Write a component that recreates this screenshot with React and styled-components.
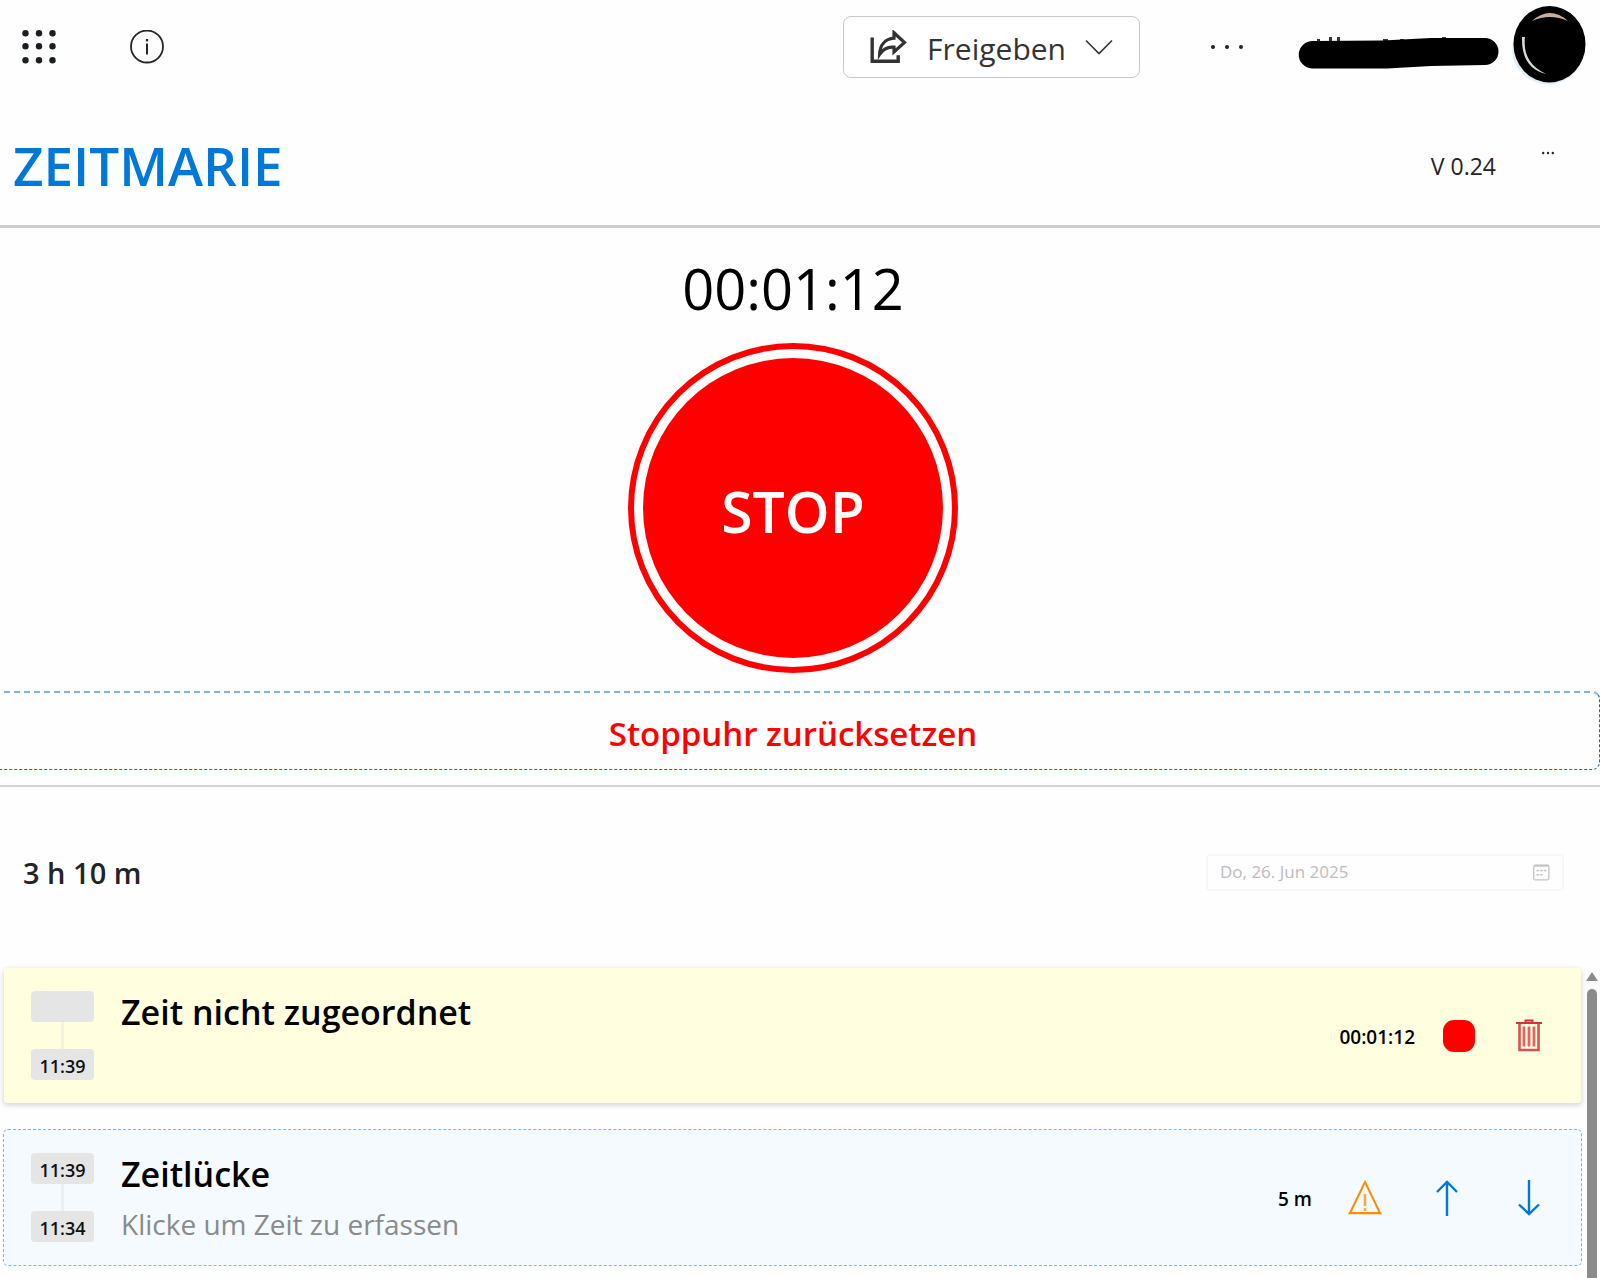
import React from "react";
import styled, { createGlobalStyle } from "styled-components";

const GlobalStyle = createGlobalStyle`
* {
    box-sizing: border-box;
}
body {
    margin: 0;
    background: #fefefe;
    color: #242424;
    font-family: "Segoe UI", "Open Sans", "Noto Sans", sans-serif;
    overflow: hidden;
}
button {
    font-family: inherit;
    padding: 0;
    border: 0;
    background: transparent;
    cursor: pointer;
}
svg {
    display: block;
}
`;

const Page = styled.div`
min-height: 100vh;
display: flex;
flex-direction: column;
overflow: hidden;
`;

const TopBar = styled.header`
height: 94px;
display: flex;
align-items: center;
justify-content: space-between;
padding: 0 14px 0 20px;
`;

const BarGroup = styled.div`
display: flex;
align-items: center;
gap: ${props => props.$gap}px;
`;

const ShareButton = styled.button`
height: 62px;
display: flex;
align-items: center;
gap: 19px;
padding: 0 26px;
border: 1px solid #c8c8c8;
border-radius: 8px;
background: #ffffff;
color: #333333;
font-size: 30px;
line-height: 40px;
`;

const ShareLabel = styled.span`
padding-top: 4px;
`;

const Account = styled.button`
display: flex;
align-items: center;
gap: 11px;
`;

const TitleBar = styled.div`
height: 134px;
display: flex;
align-items: center;
justify-content: space-between;
padding: 13px 46px 0 13px;
border-bottom: 3px solid #cccccc;
`;

const Title = styled.h1`
margin: 0;
color: #0078d7;
font-size: 53px;
line-height: 72px;
font-weight: 600;
`;

const Version = styled.div`
display: flex;
align-items: center;
gap: 46px;
font-size: 23px;
line-height: 32px;
`;

const DotsButton = styled.button`
align-self: flex-start;
`;

const Stopwatch = styled.section`
display: flex;
flex-direction: column;
align-items: center;
margin-left: -14px;
padding-top: 24px;
`;

const Elapsed = styled.div`
color: #000000;
font-size: 56px;
line-height: 72px;
margin-bottom: 19px;
`;

const StopButton = styled.button`
width: 330px;
height: 330px;
padding: 9px;
border: 6px solid #ff0000;
border-radius: 50%;
margin-bottom: 18px;
`;

const StopFace = styled.span`
height: 100%;
display: flex;
align-items: center;
justify-content: center;
padding-top: 6px;
border-radius: 50%;
background: #ff0000;
color: #ffffff;
font-size: 57px;
line-height: 72px;
font-weight: 600;
`;

const ResetButton = styled.button`
align-self: stretch;
height: 79px;
padding-top: 6px;
border: 1px dashed #1c6cb8;
border-top: 2px dashed #7fb3e0;
border-radius: 8px;
color: #ff0000;
font-size: 33px;
line-height: 48px;
font-weight: 600;
`;

const Divider = styled.hr`
width: 100%;
height: 2px;
margin: 15px 0 0;
border: 0;
background: #d4d4d4;
`;

const DayBar = styled.div`
display: flex;
align-items: center;
justify-content: space-between;
padding: 64px 36px 0 23px;
`;

const Total = styled.div`
padding-top: 2px;
font-size: 29px;
line-height: 40px;
font-weight: 600;
`;

const DateField = styled.label`
width: 358px;
height: 37px;
display: flex;
align-items: center;
padding: 0 12px;
border: 2px solid #f7f7f7;
border-radius: 4px;
`;

const DateInput = styled.input`
flex: 1;
min-width: 0;
padding: 0;
border: 0;
outline: 0;
background: transparent;
color: #bdbdbd;
font-family: inherit;
font-size: 17px;
line-height: 24px;
`;

const ListArea = styled.main`
flex: 1;
display: flex;
margin-top: 74px;
`;

const List = styled.ul`
flex: 1;
display: flex;
flex-direction: column;
gap: 25px;
margin: 0;
padding: 0 4px 12px 3px;
list-style: none;
`;

const Entry = styled.li`
height: 137px;
display: flex;
align-items: center;
padding: 0 35px 0 27px;
border: 1px ${props => props.$gap ? "dashed #7ab4e2" : "solid transparent"};
border-radius: 5px;
background: ${props => props.$gap ? "#f4fafd" : "#ffffe0"};
background-clip: ${props => props.$gap ? "border-box" : "padding-box"};
box-shadow: ${props => props.$gap ? "none" : "0 2px 5px rgba(0, 0, 0, 0.14)"};
`;

const Span = styled.div`
width: 63px;
display: flex;
flex-direction: column;
align-items: center;
`;

const Chip = styled.time`
width: 100%;
height: 31px;
border-radius: 4px;
background: #e5e5e5;
color: #111111;
font-size: 18px;
line-height: 34px;
font-weight: 600;
text-align: center;
`;

const Link = styled.div`
width: 3px;
height: 27px;
background: rgba(200, 200, 215, 0.2);
`;

const Names = styled.div`
flex: 1;
align-self: stretch;
padding: 19px 0 0 27px;
`;

const Name = styled.div`
color: #000000;
font-size: 34px;
line-height: 50px;
font-weight: 600;
`;

const Hint = styled.div`
color: #8a8a8a;
font-size: 28px;
line-height: 50px;
`;

const Duration = styled.div`
padding-top: 2px;
color: #000000;
font-size: 19px;
line-height: 28px;
font-weight: 600;
margin-right: ${props => props.$gap ? 36 : 27}px;
`;

const Actions = styled.div`
display: flex;
gap: ${props => props.$gap ? 48 : 36}px;
`;

const IconButton = styled.button`
width: 34px;
height: 36px;
display: flex;
align-items: center;
justify-content: center;
`;

const StopMark = styled.span`
width: 32px;
height: 32px;
border-radius: 11px;
background: #ff0000;
`;

const Scrollbar = styled.div`
width: 14px;
display: flex;
flex-direction: column;
align-items: center;
gap: 8px;
padding: 5px 2px 0 0;
background: #fcfcfc;
`;

const Thumb = styled.div`
flex: 1;
width: 10px;
border-radius: 5px 5px 0 0;
background: #8b8b8b;
`;

const Waffle = () => (
    <svg width="37" height="34" viewBox="0 0 37 34" fill="#1b1f23">
        {[3, 16, 30].map(y => [5.5, 19, 32.5].map(x => (
            <circle key={`${x}-${y}`} cx={x} cy={y + 0.3} r="3.2"/>
        )))}
    </svg>
)

const Info = () => (
    <svg width="34" height="34" viewBox="0 0 34 34" fill="none" stroke="#22262c">
        <circle cx="17" cy="16.500" r="16" strokeWidth="1.8"/>
        <path d="M17 13.500v11" strokeWidth="2"/>
        <path d="M17 9v2.400" strokeWidth="2.2"/>
    </svg>
)

const Share = () => (
    <svg width="38" height="34" viewBox="0 0 38 34" fill="none" stroke="#333333" strokeWidth="3.400">
        <path d="M2.200 7.500v23.800h26v-6"/>
        <path d="M24 2.800 34.500 12.500 24 22v-4.800c-6-.6-10.500 1.200-14.400 7.200.3-9.500 5.600-15.400 14.400-16.200z" strokeWidth="3.200"/>
    </svg>
)

const Chevron = () => (
    <svg width="28" height="16" viewBox="0 0 28 16" fill="none" stroke="#333333" strokeWidth="1.6">
        <path d="M1 1.500 14 14.500 27 1.500"/>
    </svg>
)

const Ellipsis = ({width, r}) => (
    <svg width={width} height="6" fill="#222222">
        <circle cx={r} cy="3" r={r}/>
        <circle cx={width / 2} cy="3" r={r}/>
        <circle cx={width - r} cy="3" r={r}/>
    </svg>
)

const Scribble = () => (
    <svg width="204" height="46" viewBox="0 0 204 46">
        <path d="M20 15h3v3h-3zM32 13h3v4h-3zM40 13h3v4h-3zM86 15h5v3h-5zM103 15h4v3h-4zM145 13h4v3h-4z" fill="#26364d"/>
        <path d="M16 17 86 16.500 134 14H188a13.500 13.500 0 0 1 0 27L134 42 90 44.500H15A13.700 13.700 0 0 1 16 17z" fill="#000000"/>
    </svg>
)

const Avatar = () => (
    <svg width="74" height="82" viewBox="0 0 74 82" fill="none">
        <ellipse cx="36" cy="43" rx="36" ry="35.500" fill="#e3edf5"/>
        <ellipse cx="37.500" cy="38.200" rx="36" ry="38.200" fill="#000000"/>
        <path d="M20 15Q38 -1 56 15 38 7 20 15z" fill="#c9ad9b"/>
        <path d="M10 31h3q-3 26 21 37-25-6-24-37z" fill="#d8dad6"/>
    </svg>
)

const Calendar = () => (
    <svg width="17" height="17" viewBox="0 0 17 17" fill="none" stroke="#c4c4c4">
        <rect x=".7" y="1.200" width="15.200" height="14.600" rx="1.500" strokeWidth="1.300"/>
        <path d="M1 1.800h15" strokeWidth="1.800"/>
        <path d="M3.500 6.500h10M3.500 10.800h6" strokeWidth="1.600" strokeDasharray="2.500 1.200"/>
    </svg>
)

const Trash = () => (
    <svg width="26" height="33" viewBox="0 0 26 33" fill="none" stroke="#d13438">
        <path d="M0 4h26" strokeWidth="2"/>
        <path d="M9.500 3.500V1.500h7v2" strokeWidth="2"/>
        <path d="M3.500 4v27h19V4" strokeWidth="2.600" strokeOpacity=".85"/>
        <path d="M8 7.500v20M13 7.500v20M18 7.500v20" strokeWidth="2.800" strokeOpacity=".75"/>
    </svg>
)

const Warning = () => (
    <svg width="34" height="35" viewBox="0 0 34 35" fill="none" stroke="#ff8c00">
        <path d="M17 2 32 33H2z" strokeWidth="2"/>
        <path d="M0 33.500h34" strokeWidth="2" strokeOpacity=".5"/>
        <path d="M17 14v12M17 28v3" strokeWidth="2.600" strokeOpacity=".75"/>
    </svg>
)

const Arrow = ({down}) => (
    <svg width="22" height="36" viewBox="0 0 22 36" fill="none" stroke="#0078d7" strokeWidth="2.400">
        {down
            ? <path d="M11 0v34M1 24.500 11 34 21 24.500"/>
            : <path d="M11 36V2M1 12 11 2 21 12"/>
        }
    </svg>
)

export default () => (
    <>
        <GlobalStyle/>
        <Page>
            <TopBar>
                <BarGroup $gap={73}>
                    <button aria-label="Apps"><Waffle/></button>
                    <button aria-label="Info"><Info/></button>
                </BarGroup>
                <BarGroup $gap={54}>
                    <BarGroup $gap={71}>
                        <ShareButton>
                            <Share/>
                            <ShareLabel>Freigeben</ShareLabel>
                            <Chevron/>
                        </ShareButton>
                        <button aria-label="Mehr"><Ellipsis width={32} r={2}/></button>
                    </BarGroup>
                    <Account aria-label="Konto">
                        <Scribble/>
                        <Avatar/>
                    </Account>
                </BarGroup>
            </TopBar>
            <TitleBar>
                <Title>ZEITMARIE</Title>
                <Version>
                    V 0.24
                    <DotsButton aria-label="Optionen"><Ellipsis width={12} r={1.2}/></DotsButton>
                </Version>
            </TitleBar>
            <Stopwatch>
                <Elapsed>00:01:12</Elapsed>
                <StopButton><StopFace>STOP</StopFace></StopButton>
                <ResetButton>Stoppuhr zurücksetzen</ResetButton>
            </Stopwatch>
            <Divider/>
            <DayBar>
                <Total>3 h 10 m</Total>
                <DateField>
                    <DateInput aria-label="Datum" defaultValue="Do, 26. Jun 2025"/>
                    <Calendar/>
                </DateField>
            </DayBar>
            <ListArea>
                <List>
                    <Entry>
                        <Span>
                            <Chip/>
                            <Link/>
                            <Chip>11:39</Chip>
                        </Span>
                        <Names>
                            <Name>Zeit nicht zugeordnet</Name>
                        </Names>
                        <Duration>00:01:12</Duration>
                        <Actions>
                            <IconButton aria-label="Stop"><StopMark/></IconButton>
                            <IconButton aria-label="Löschen"><Trash/></IconButton>
                        </Actions>
                    </Entry>
                    <Entry $gap>
                        <Span>
                            <Chip>11:39</Chip>
                            <Link/>
                            <Chip>11:34</Chip>
                        </Span>
                        <Names>
                            <Name>Zeitlücke</Name>
                            <Hint>Klicke um Zeit zu erfassen</Hint>
                        </Names>
                        <Duration $gap>5 m</Duration>
                        <Actions $gap>
                            <IconButton aria-label="Warnung"><Warning/></IconButton>
                            <IconButton aria-label="Nach oben"><Arrow/></IconButton>
                            <IconButton aria-label="Nach unten"><Arrow down/></IconButton>
                        </Actions>
                    </Entry>
                </List>
                <Scrollbar>
                    <svg width="12" height="9" viewBox="0 0 12 9"><path d="M6 0 12 9H0z" fill="#8b8b8b"/></svg>
                    <Thumb/>
                </Scrollbar>
            </ListArea>
        </Page>
    </>
)
